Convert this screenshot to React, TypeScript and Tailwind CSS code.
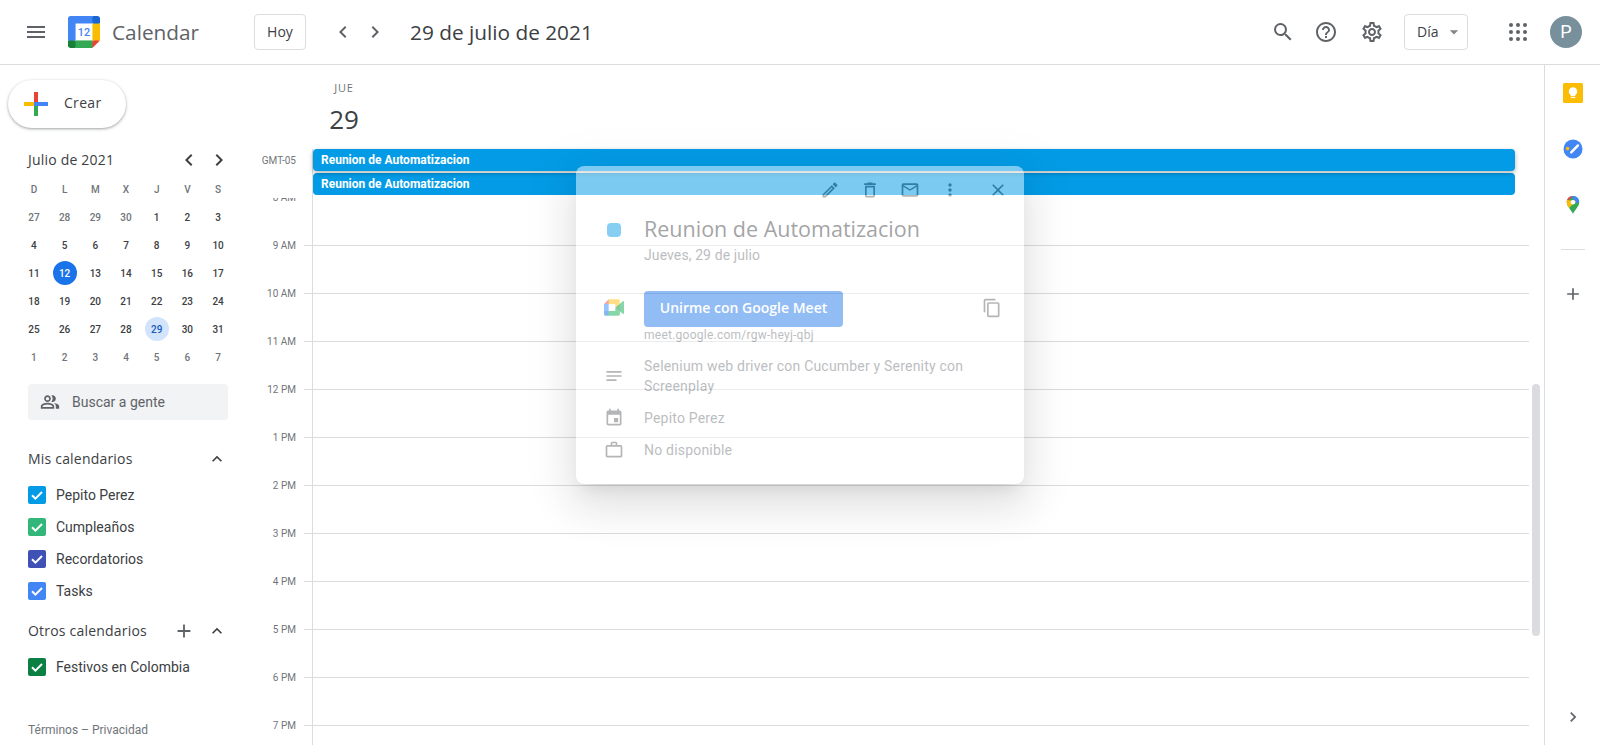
import React from "react";
import {
  MdMenu, MdSearch, MdHelpOutline, MdOutlineSettings, MdChevronLeft, MdChevronRight, MdExpandLess, MdAdd, MdOutlineEdit,
  MdOutlineDelete, MdMailOutline, MdMoreVert, MdClose, MdContentCopy, MdNotes, MdEvent, MdOutlineWorkOutline, MdOutlinePeopleAlt, MdArrowDropDown,
} from "react-icons/md";

const GS = "font-['Open_Sans',sans-serif]";

function CalLogo() {
  return (
    <svg viewBox="0 0 200 200" className="w-8 h-8 shrink-0">
      <polygon fill="#fff" points="152.632,47.368 47.368,47.368 47.368,152.632 152.632,152.632" />
      <polygon fill="#EA4335" points="152.632,200 200,152.632 176.316,148.592 152.632,152.632 148.308,174.316" />
      <path fill="#188038" d="M0,152.632v31.579C0,192.934,7.066,200,15.789,200h31.579l4.863-23.684l-4.863-23.684l-25.263-4.04L0,152.632z" />
      <path fill="#1967D2" d="M200,47.368V15.789C200,7.066,192.934,0,184.211,0h-31.579c-2.881,11.748-4.321,20.394-4.321,25.939c0,5.545,1.44,12.688,4.321,21.429c10.476,3,18.371,4.5,23.684,4.5C181.63,51.868,189.526,50.368,200,47.368z" />
      <polygon fill="#FBBC04" points="200,47.368 152.632,47.368 152.632,152.632 200,152.632" />
      <polygon fill="#34A853" points="152.632,152.632 47.368,152.632 47.368,200 152.632,200" />
      <path fill="#4285F4" d="M152.632,0H15.789C7.066,0,0,7.066,0,15.789v136.842h47.368V47.368h105.263V0z" />
      <text x="100" y="124" textAnchor="middle" fontSize="68" fontWeight="500" fill="#4285F4" fontFamily="Roboto, sans-serif">12</text>
    </svg>
  );
}

function PlusLogo() {
  return (
    <svg viewBox="0 0 24 24" className="w-6 h-6 shrink-0">
      <rect x="10" y="0" width="4" height="10" fill="#ea4335" />
      <rect x="0" y="10" width="10" height="4" fill="#fbbc04" />
      <rect x="14" y="10" width="10" height="4" fill="#4285f4" />
      <rect x="10" y="14" width="4" height="10" fill="#34a853" />
      <rect x="10" y="10" width="4" height="4" fill="#4285f4" />
    </svg>
  );
}

function MeetLogo() {
  return (
    <svg viewBox="0 0 87.5 72" className="w-[20px] h-[17px]">
      <path fill="#00832d" d="M49.5 36l8.53 9.75 11.47 7.33 2-17.02-2-16.64-11.69 6.44z" />
      <path fill="#0066da" d="M0 51.5V66c0 3.315 2.685 6 6 6h14.5l3-10.96-3-9.54-9.95-3z" />
      <path fill="#e94235" d="M20.5 0L0 20.5l10.55 3 9.95-3 2.95-9.41z" />
      <path fill="#2684fc" d="M20.5 20.5H0v31h20.5z" />
      <path fill="#00ac47" d="M82.6 8.68L69.5 19.42v33.66l13.16 10.79c1.97 1.54 4.85.135 4.85-2.37V11c0-2.535-2.945-3.925-4.91-2.32zM49.5 36v15.5h-29V72h43c3.315 0 6-2.685 6-6V53.08z" />
      <path fill="#ffba00" d="M63.5 0h-43v20.5h29V36l20-16.57V6c0-3.315-2.685-6-6-6z" />
    </svg>
  );
}

function KeepLogo() {
  return (
    <svg viewBox="0 0 20 20" className="w-5 h-5">
      <rect width="20" height="20" rx="1.5" fill="#fbbc04" />
      <path fill="#fff" d="M10 4.2a4.2 4.2 0 0 0-2.3 7.7v1h4.6v-1A4.2 4.2 0 0 0 10 4.2z" />
      <rect x="7.8" y="13.8" width="4.4" height="1.3" fill="#fff" />
    </svg>
  );
}

function TasksLogo() {
  return (
    <svg viewBox="0 0 20 20" className="w-5 h-5">
      <circle cx="10" cy="10" r="9.5" fill="#4285f4" />
      <path d="M8.2 13.4L15 6.4" stroke="#fff" strokeWidth="2.4" strokeLinecap="round" fill="none" />
      <circle cx="4.6" cy="9.6" r="1.8" fill="#fbbc04" />
    </svg>
  );
}

function MapsLogo() {
  return (
    <svg viewBox="0 0 20 20" className="w-5 h-5">
      <defs>
        <clipPath id="pin">
          <path d="M10 1c-3.6 0-6.2 2.8-6.2 6.2 0 4.4 4.7 7.8 6.2 11.8 1.5-4 6.2-7.4 6.2-11.8C16.2 3.8 13.6 1 10 1z" />
        </clipPath>
      </defs>
      <g clipPath="url(#pin)">
        <rect width="20" height="20" fill="#34a853" />
        <path d="M3 0h8L3 8z" fill="#ea4335" />
        <path d="M7 0h11v7l-5 1z" fill="#4285f4" />
        <path d="M2 7l2-2 9 1-8 8-3-3z" fill="#fbbc04" />
      </g>
      <circle cx="10" cy="7.2" r="2.3" fill="#fff" />
    </svg>
  );
}

function Header() {
  return (
    <header className="h-[65px] shrink-0 border-b border-[#dadce0] flex items-center bg-white">
      <div className="w-[72px] h-full flex items-center shrink-0 pl-[24px]"><MdMenu size={24} color="#5f6368" /></div>
      <div className="ml-[-4px] flex items-center w-[186px]">
        <CalLogo />
        <span className={`ml-3 text-[20.8px] leading-7 text-[#5f6368] ${GS}`}>Calendar</span>
      </div>
      <button className={`w-[52px] h-9 rounded border border-[#dadce0] text-sm text-[#3c4043] ${GS}`}>Hoy</button>
      <div className="ml-[25px] flex items-center gap-2 text-[#5f6368]">
        <MdChevronLeft size={24} />
        <MdChevronRight size={24} />
      </div>
      <div className={`ml-[23px] text-[20.8px] leading-7 text-[#3c4043] ${GS}`}>29 de julio de 2021</div>
      <div className="ml-auto flex items-center text-[#5f6368]">
        <MdSearch size={24} />
        <MdHelpOutline size={24} className="ml-[19px]" />
        <MdOutlineSettings size={24} className="ml-[22px]" />
        <button className={`ml-[20px] w-16 h-9 rounded border border-[#dadce0] flex items-center pl-[12px] text-sm text-[#3c4043] ${GS}`}>
          Día
          <MdArrowDropDown size={20} color="#80868b" className="ml-[6px]" />
        </button>
        <svg viewBox="0 0 24 24" className="w-6 h-6 ml-[38px]" fill="#5f6368">
          {[5, 12, 19].flatMap((y) => [5, 12, 19].map((x) => <circle key={`${x}-${y}`} cx={x} cy={y} r="2" />))}
        </svg>
        <div className="ml-[20px] mr-[18px] w-8 h-8 rounded-full bg-[#78909c] text-white text-lg flex items-center justify-center font-['Roboto',sans-serif]">P</div>
      </div>
    </header>
  );
}

const days = ["D", "L", "M", "X", "J", "V", "S"];
const cal: [number, boolean][] = [
  ...[27, 28, 29, 30].map((d): [number, boolean] => [d, true]),
  ...Array.from({ length: 31 }, (_, i): [number, boolean] => [i + 1, false]),
  ...[1, 2, 3, 4, 5, 6, 7].map((d): [number, boolean] => [d, true]),
];

function MiniCal() {
  return (
    <div>
      <div className="flex items-center h-6 pl-[28px] pr-[25px]">
        <span className={`text-sm font-medium tracking-[0.2px] text-[#3c4043] ${GS}`}>Julio de 2021</span>
        <div className="ml-auto flex gap-[6px] text-[#3c4043]">
          <MdChevronLeft size={24} />
          <MdChevronRight size={24} />
        </div>
      </div>
      <div className="grid grid-cols-[repeat(7,30.7px)] auto-rows-[28px] ml-[18.6px] mt-[3px] text-[10px] font-medium font-['Roboto',sans-serif]">
        {days.map((d) => (
          <div key={d} className="flex items-center justify-center text-[#70757a]">{d}</div>
        ))}
        {cal.map(([d, other], i) => {
          const today = d === 12 && !other;
          const sel = d === 29 && !other;
          return (
            <div key={i} className="flex items-center justify-center">
              <span
                className={`w-6 h-6 rounded-full flex items-center justify-center ${today ? "bg-[#1a73e8] text-white" : sel ? "bg-[#d2e3fc] text-[#185abc]" : other ? "text-[#70757a]" : "text-[#3c4043]"}`}
              >
                {d}
              </span>
            </div>
          );
        })}
      </div>
    </div>
  );
}

function CalRow({ color, label }: { color: string; label: string }) {
  return (
    <div className="h-8 flex items-center pl-[28px]">
      <span className="w-[18px] h-[18px] rounded-[2px] flex items-center justify-center" style={{ backgroundColor: color }}>
        <svg viewBox="0 0 18 18" className="w-[18px] h-[18px]">
          <path d="M4 9.2l3.4 3.4L14 6" stroke="#fff" strokeWidth="2" fill="none" />
        </svg>
      </span>
      <span className="ml-[10px] text-sm text-[#3c4043] font-['Roboto',sans-serif]">{label}</span>
    </div>
  );
}

function Sidebar() {
  return (
    <aside className="w-[256px] shrink-0 flex flex-col">
      <div className="pl-2 pt-[15px]">
        <div className="w-[118px] h-12 rounded-full bg-white flex items-center pl-4 shadow-[0_1px_2px_0_rgba(60,64,67,0.3),0_1px_3px_1px_rgba(60,64,67,0.15)]">
          <PlusLogo />
          <span className={`ml-4 text-sm tracking-[0.3px] text-[#3c4043] -translate-y-px ${GS}`}>Crear</span>
        </div>
      </div>
      <div className="mt-[20px]"><MiniCal /></div>
      <div className="mx-[28px] mt-[13px] h-9 rounded bg-[#f1f3f4] flex items-center pl-3">
        <MdOutlinePeopleAlt size={20} color="#5f6368" />
        <span className="ml-3 text-sm text-[#5f6368] font-['Roboto',sans-serif]">Buscar a gente</span>
      </div>
      <div className="mt-[23px] h-8 flex items-center pl-[28px] pr-[29px]">
        <span className={`text-sm font-medium tracking-[0.2px] text-[#3c4043] ${GS}`}>Mis calendarios</span>
        <MdExpandLess size={20} color="#3c4043" className="ml-auto" />
      </div>
      <div className="mt-[4px]">
        <CalRow color="#039be5" label="Pepito Perez" />
        <CalRow color="#33b679" label="Cumpleaños" />
        <CalRow color="#3f51b5" label="Recordatorios" />
        <CalRow color="#4285f4" label="Tasks" />
      </div>
      <div className="mt-[8px] h-8 flex items-center pl-[28px] pr-[29px]">
        <span className={`text-sm font-medium tracking-[0.2px] text-[#3c4043] ${GS}`}>Otros calendarios</span>
        <MdAdd size={22} color="#5f6368" className="ml-auto" />
        <MdExpandLess size={20} color="#3c4043" className="ml-[12px]" />
      </div>
      <div className="mt-[4px]">
        <CalRow color="#0b8043" label="Festivos en Colombia" />
      </div>
      <div className="mt-[39px] pl-[28px] text-xs text-[#70757a] font-['Roboto',sans-serif] leading-4">Términos – Privacidad</div>
    </aside>
  );
}

const hours = ["8 AM", "9 AM", "10 AM", "11 AM", "12 PM", "1 PM", "2 PM", "3 PM", "4 PM", "5 PM", "6 PM", "7 PM"];

function EventBar({ shadow }: { shadow?: boolean }) {
  return (
    <div className={`h-[22px] rounded bg-[#039be5] text-white text-xs font-bold leading-[22px] pl-[8px] font-['Roboto',sans-serif] ${shadow ? "relative z-10 shadow-[0_2px_5px_rgba(0,0,0,0.3)]" : ""}`}>
      Reunion de Automatizacion
    </div>
  );
}

function Main() {
  return (
    <main className="flex-1 min-w-0 flex flex-col relative font-['Roboto',sans-serif]">
      <div className="h-[84px] shrink-0 w-[176px] flex flex-col items-center pt-[15px]">
        <div className={`text-[11px] font-medium tracking-[0.8px] leading-4 text-[#70757a] ${GS}`}>JUE</div>
        <div className={`text-[26px] leading-[36px] text-[#3c4043] mt-[5px] ${GS}`}>29</div>
      </div>
      <div className="h-[49px] shrink-0 flex relative z-10 w-[1273px]">
        <div className="w-[40px] pt-[6px] text-right text-[10px] leading-3 text-[#70757a]">GMT-05</div>
        <div className="ml-[16px] w-[1203px] border-l border-[#dadce0] flex flex-col gap-[2px]">
          <EventBar shadow />
          <EventBar />
        </div>
      </div>
      <div className="flex-1 min-h-0 overflow-hidden relative">
        <div className="mt-[-1px]">
          {hours.map((h, i) => (
            <div key={h} className="flex h-12 w-[1273px]">
              <div className="w-[40px] text-right text-[10px] leading-3 text-[#70757a]"><span className="block -translate-y-[5px]">{h}</span></div>
              <div className={`ml-[8px] w-2 border-t ${i === 0 ? "border-transparent" : "border-[#dadce0]"}`} />
              <div className={`flex-1 border-t border-l border-l-[#dadce0] ${i === 0 ? "border-t-[#b0b2b5]" : "border-t-[#dadce0]"}`} />
            </div>
          ))}
        </div>
        <div className="absolute right-[4px] top-[186px] w-2 h-[252px] rounded-full bg-[#dadce0]" />
      </div>
    </main>
  );
}

function RightPanel() {
  return (
    <aside className="w-[56px] shrink-0 border-l border-[#dadce0] flex flex-col items-center pt-[18px] text-[#5f6368]">
      <KeepLogo />
      <div className="mt-9"><TasksLogo /></div>
      <div className="mt-9"><MapsLogo /></div>
      <div className="w-6 h-px bg-[#dadce0] mt-[34px]" />
      <MdAdd size={20} className="mt-[34px]" />
      <MdChevronRight size={20} className="mt-auto mb-[18px]" />
    </aside>
  );
}

function PopRow({ icon, children, className }: { icon: React.ReactNode; children: React.ReactNode; className?: string }) {
  return (
    <div className={`flex items-center ${className ?? ""}`}>
      <div className="w-[68px] flex justify-center shrink-0 pl-[8px] text-[#5f6368]">{icon}</div>
      <div className="flex-1 min-w-0 pr-[30px]">{children}</div>
    </div>
  );
}

function Popup() {
  return (
    <div className="absolute left-[576px] top-[166px] w-[448px] h-[318px] rounded-lg bg-white opacity-[0.47] z-20 font-['Roboto',sans-serif] shadow-[0_24px_38px_3px_rgba(0,0,0,0.14),0_9px_46px_8px_rgba(0,0,0,0.12),0_11px_15px_-7px_rgba(0,0,0,0.2)]">
      <div className="flex justify-end items-center h-[48px] pr-[16px] gap-[20px] text-[#5f6368]">
        <MdOutlineEdit size={20} />
        <MdOutlineDelete size={20} />
        <MdMailOutline size={20} />
        <MdMoreVert size={20} />
        <MdClose size={20} className="ml-[8px]" />
      </div>
      <div className="flex mt-[1px]">
        <div className="w-[68px] pl-[31px] pt-[8px] shrink-0"><div className="w-[14px] h-[14px] rounded bg-[#039be5]" /></div>
        <div>
          <div className={`text-[21.5px] leading-7 text-[#3c4043] ${GS}`}>Reunion de Automatizacion</div>
          <div className="text-sm tracking-[0.1px] leading-5 text-[#70757a] mt-[2px]">Jueves, 29 de julio</div>
        </div>
      </div>
      <div className="flex mt-[26px]">
        <div className="w-[68px] pl-[28px] pt-[8px] shrink-0"><MeetLogo /></div>
        <div className="flex-1">
          <div className={`w-[199px] h-9 pb-[2px] rounded bg-[#1a73e8] text-white text-sm font-semibold flex items-center justify-center ${GS}`}>Unirme con Google Meet</div>
          <div className="text-xs tracking-[0.25px] leading-4 text-[#70757a]">meet.google.com/rgw-heyj-qbj</div>
        </div>
        <MdContentCopy size={20} color="#5f6368" className="mt-[7px] mr-[22px]" />
      </div>
      <PopRow icon={<MdNotes size={20} />} className="mt-[13px]">
        <div className="text-sm tracking-[0.2px] leading-5 text-[#70757a]">Selenium web driver con Cucumber y Serenity con Screenplay</div>
      </PopRow>
      <PopRow icon={<MdEvent size={20} />} className="mt-[12px]">
        <div className="text-sm tracking-[0.2px] leading-5 text-[#70757a]">Pepito Perez</div>
      </PopRow>
      <PopRow icon={<MdOutlineWorkOutline size={20} />} className="mt-[12px]">
        <div className="text-sm tracking-[0.2px] leading-5 text-[#70757a]">No disponible</div>
      </PopRow>
    </div>
  );
}

export default function App() {
  return (
    <div className="w-[1600px] h-[745px] overflow-hidden relative bg-white flex flex-col">
      <Header />
      <div className="flex-1 min-h-0 flex">
        <Sidebar />
        <Main />
        <RightPanel />
      </div>
      <Popup />
    </div>
  );
}
